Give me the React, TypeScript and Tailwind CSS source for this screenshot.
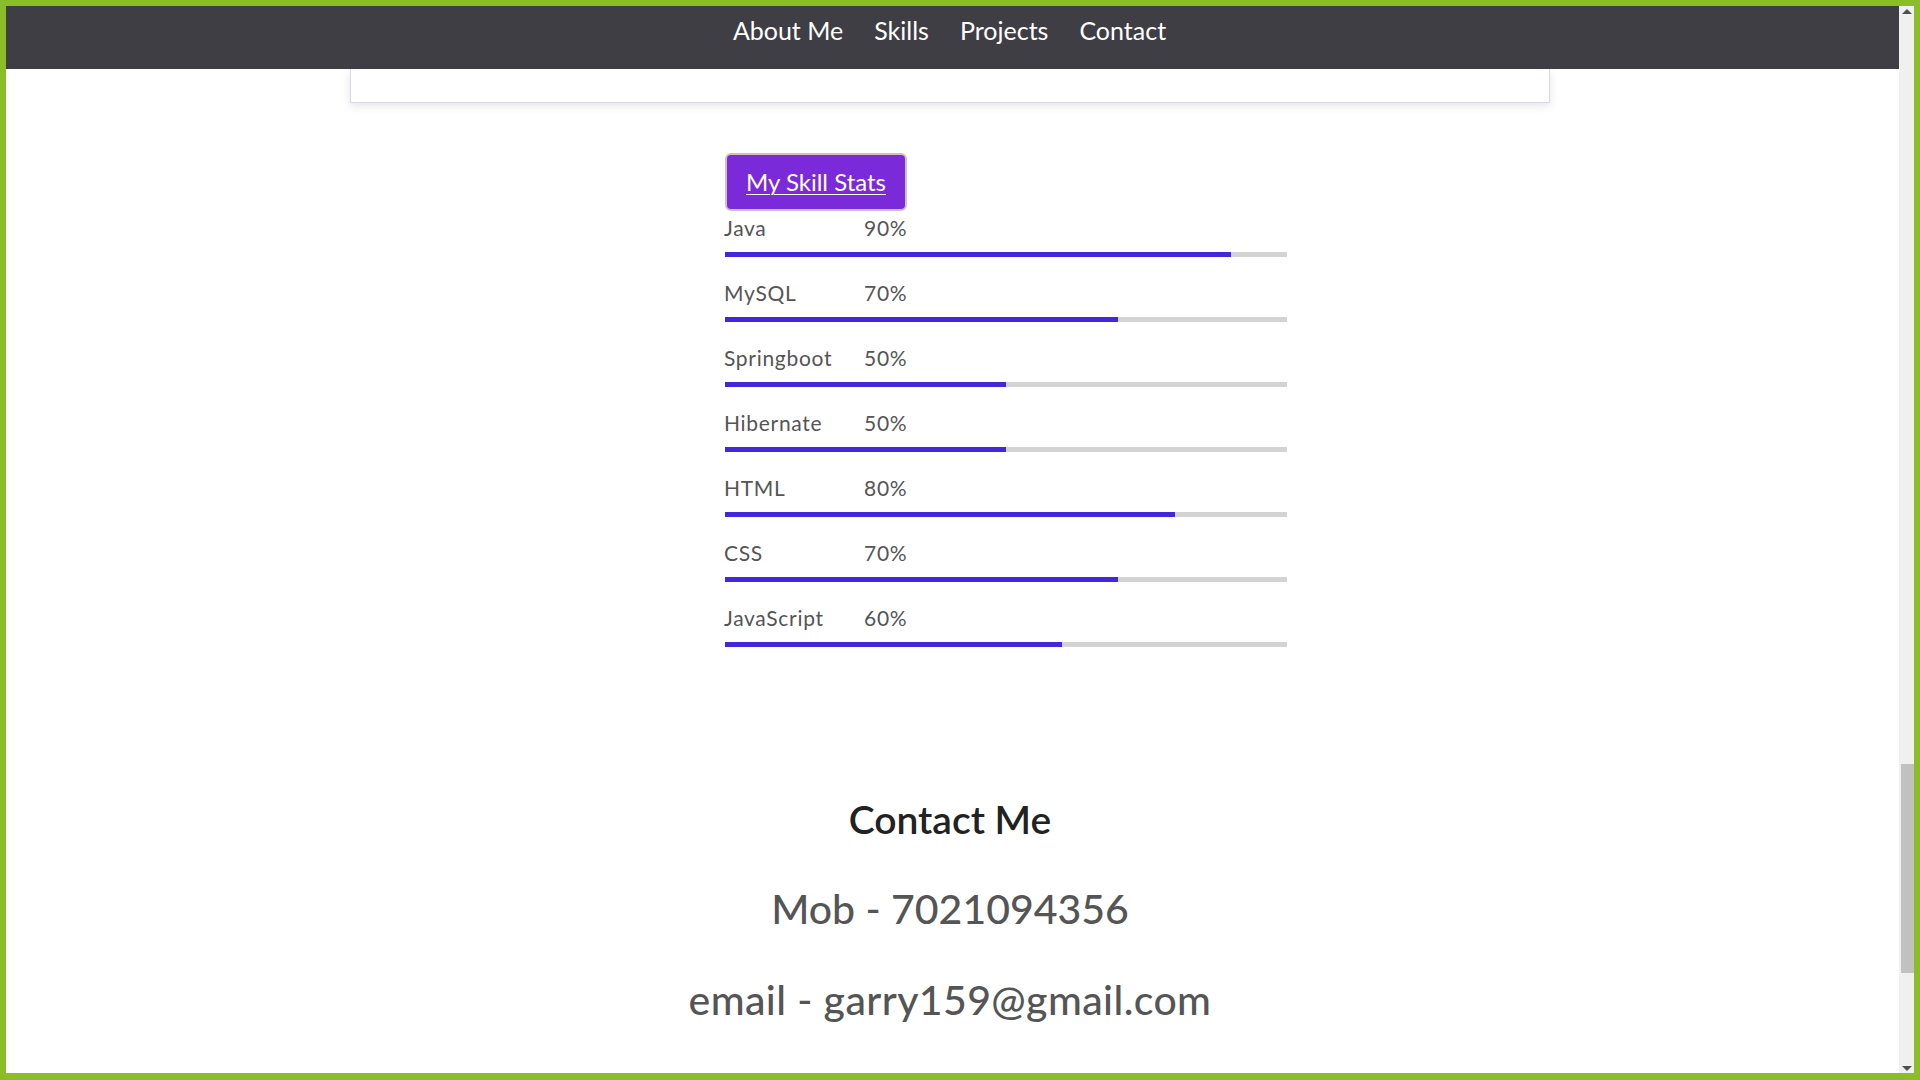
import React from "react";

const skills = [
  { name: "Java", pct: 90 },
  { name: "MySQL", pct: 70 },
  { name: "Springboot", pct: 50 },
  { name: "Hibernate", pct: 50 },
  { name: "HTML", pct: 80 },
  { name: "CSS", pct: 70 },
  { name: "JavaScript", pct: 60 },
];

export default function App() {
  return (
    <div
      className="w-[1920px] h-[1080px] bg-[#8bbd27] pt-[6px] pl-[6px] pr-[6px] pb-[7px] flex overflow-hidden"
      style={{ fontFamily: "Lato, 'Noto Sans', sans-serif" }}
    >
      <div className="flex-1 bg-white flex flex-col overflow-hidden">
        <nav className="h-[63px] shrink-0 bg-[#3f3e44] flex justify-center gap-[31px] pt-[7px] pr-[6px]">
          {["About Me", "Skills", "Projects", "Contact"].map((t) => (
            <a key={t} className="text-white text-[25px] leading-[35px]">
              {t}
            </a>
          ))}
        </nav>
        <div className="w-[1200px] ml-[344px] flex flex-col">
          <div className="h-[34px] bg-white border-x border-b border-[#d9dae3] shadow-[0_3px_8px_rgba(70,74,120,0.14)]" />
          <div className="ml-[375px] w-[562px] mt-[50px] flex flex-col">
            <button className="w-[182px] h-[58px] rounded-[6px] bg-[#7a2ad8] border-2 border-[#d4bec4] text-white text-[24px] underline underline-offset-[3px] decoration-1 self-start">
              My Skill Stats
            </button>
            <div className="flex flex-col mt-[2px]">
              {skills.map((s) => (
                <div key={s.name} className="flex flex-col">
                  <div className="flex text-[21px] tracking-[0.7px] leading-[30px] text-[#555555] -ml-[1px]">
                    <span className="w-[140px]">{s.name}</span>
                    <span>{s.pct}%</span>
                  </div>
                  <div className="mt-[9px] mb-[21px] h-[5px] bg-[#d3d3d3] w-full">
                    <div className="h-full bg-[#4427da]" style={{ width: `${s.pct}%` }} />
                  </div>
                </div>
              ))}
            </div>
          </div>
          <div className="flex flex-col items-center mt-[130px]">
            <h2 className="text-[39px] leading-[43px] font-semibold text-[#222222]">Contact Me</h2>
            <p className="mt-[44px] text-[41px] leading-[48px] font-medium text-[#555555]">Mob - 7021094356</p>
            <p className="mt-[43px] text-[41px] tracking-[0.4px] leading-[48px] font-medium text-[#555555]">email - garry159@gmail.com</p>
          </div>
        </div>
      </div>
      <div className="w-[15px] bg-[#f0f0f0] flex flex-col items-center justify-between">
        <div className="mt-[3px] w-0 h-0 border-l-[5px] border-r-[5px] border-b-[5px] border-l-transparent border-r-transparent border-b-[#505050]" />
        <div className="flex-1 flex flex-col w-full">
          <div className="h-[750px]" />
          <div className="h-[209px] ml-[2px] bg-[#c1c1c1]" />
        </div>
        <div className="mb-[2px] w-0 h-0 border-l-[5px] border-r-[5px] border-t-[5px] border-l-transparent border-r-transparent border-t-[#505050]" />
      </div>
    </div>
  );
}
